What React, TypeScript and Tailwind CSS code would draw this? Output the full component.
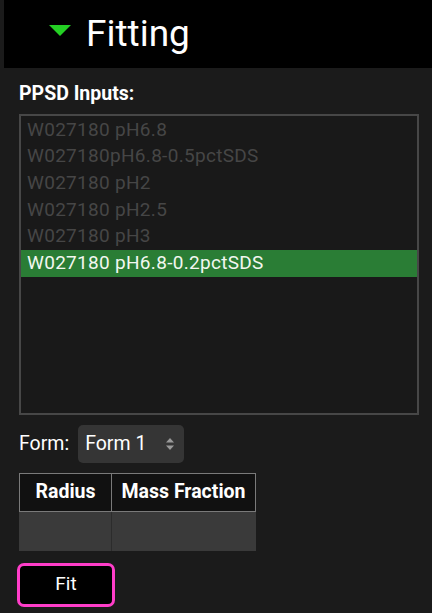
import React from "react";

const inputs = [
  "W027180 pH6.8",
  "W027180pH6.8-0.5pctSDS",
  "W027180 pH2",
  "W027180 pH2.5",
  "W027180 pH3",
  "W027180 pH6.8-0.2pctSDS",
];

const App = () => {
  const selected = 5;
  return (
    <div className="w-[432px] h-[613px] bg-[#1b1b1b] overflow-hidden font-['Roboto',sans-serif] text-white">
      {/* HEADER */}
      <div className="ml-[4px] h-[68px] bg-black flex items-center pl-[44px]">
        <svg width="24" height="12" viewBox="0 0 24 12" className="mr-[14px] -mt-[6px]">
          <polygon points="1,0 23,0 12,11" fill="#24d024" />
        </svg>
        <span className="text-[37px] leading-none -mt-[2px]">Fitting</span>
      </div>

      <div className="pl-[19px] pr-[13px]">
        <div className="mt-[16px] text-[19.5px] font-bold leading-none">PPSD Inputs:</div>

        {/* LIST */}
        <div className="mt-[10px] h-[301px] border-2 border-[#474747] bg-[#191919] pt-[1px]">
          {inputs.map((name, i) => (
            <div
              key={name}
              className={
                i === selected
                  ? "h-[26.7px] flex items-center pl-[6px] text-[19px] tracking-[0.3px] bg-[#2a7d35] text-[#f2f7f0]"
                  : "h-[26.7px] flex items-center pl-[6px] text-[19px] tracking-[0.3px] text-[#464646]"
              }
            >
              {name}
            </div>
          ))}
        </div>

        {/* FORM */}
        <div className="mt-[10px] flex items-center gap-[9px]">
          <span className="text-[19.5px]">Form:</span>
          <div className="w-[106px] h-[38px] rounded-[5px] bg-[#353535] flex items-center justify-between pl-[7px] pr-[9px]">
            <span className="text-[19.5px]">Form 1</span>
            <svg width="10" height="16" viewBox="0 0 10 16">
              <polygon points="5,2 9,6.5 1,6.5" fill="#9a9a9a" />
              <polygon points="5,14 9,9.5 1,9.5" fill="#9a9a9a" />
            </svg>
          </div>
        </div>

        {/* TABLE */}
        <div className="mt-[10px] w-[237px] grid grid-cols-[93px_144px]">
          <div className="h-[39px] border border-[#7a7a7a] bg-[#111] flex items-center justify-center text-[19.5px] font-bold">
            Radius
          </div>
          <div className="h-[39px] border border-l-0 border-[#7a7a7a] bg-[#111] flex items-center justify-center text-[19.5px] font-bold">
            Mass Fraction
          </div>
          <div className="h-[39px] bg-[#3a3a3a] border-r border-[#2c2c2c]"></div>
          <div className="h-[39px] bg-[#3a3a3a]"></div>
        </div>

        {/* FIT */}
        <button className="mt-[12px] -ml-[2px] w-[98px] h-[44px] rounded-[7px] border-[3px] border-[#ff3dc9] bg-black text-[19px] text-white">
          Fit
        </button>
      </div>
    </div>
  );
};

export default App;
